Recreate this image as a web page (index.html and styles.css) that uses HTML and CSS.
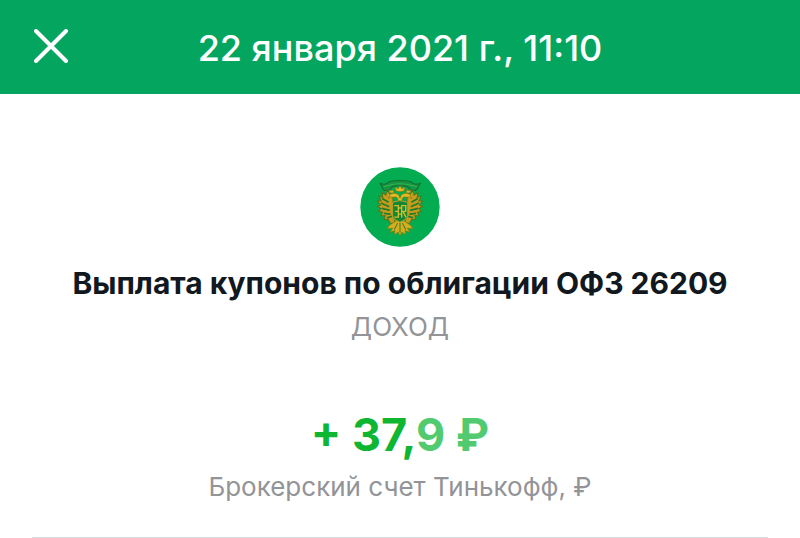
FILE: index.html
```html
<!DOCTYPE html>
<html lang="ru">
<head>
    <meta charset="UTF-8">
    <meta name="viewport" content="width=device-width, initial-scale=1.0">
    <title>Выплата купонов</title>
    <link rel="stylesheet" href="styles.css">
</head>
<body>

<header class="header">
    <button type="button" class="close-btn" aria-label="Закрыть">
        <svg viewBox="0 0 34 34" width="34" height="34" fill="none" stroke="currentColor" stroke-width="4" stroke-linecap="round">
            <path d="M2 2L32 32M32 2L2 32"/>
        </svg>
    </button>
    <h1 class="date">22 января 2021 г., 11:10</h1>
</header>

<main class="operation">
    <svg class="logo" viewBox="32 21 238 238" aria-hidden="true">
        <circle cx="151" cy="140" r="118" fill="#03ac50"/>
        <!-- ribbon -->
        <path d="M92 70Q108 76 118 65Q150 58 184 65Q194 76 211 70L205 82Q201 94 184 90L172 79Q150 73 130 79L118 90Q101 94 98 82Z" fill="#159646" stroke="#176b2b" stroke-width="3"/>
        <path d="M104 79L119 75Q150 66 183 75L199 79" fill="none" stroke="#39b84b" stroke-width="3"/>
        <!-- wings -->
        <g fill="#c79c1e" stroke="#56761b" stroke-width="3">
            <path d="M130 109Q121 103 112 91L109 105L97 96L100 111L88 108L95 122L84 122L93 134L84 138L95 145L87 152L99 156L94 166L107 166L104 178L116 176L122 188L138 188L131 170Z"/>
            <path d="M172 109Q181 103 190 91L193 105L205 96L202 111L214 108L207 122L218 122L209 134L218 138L207 145L215 152L203 156L208 166L195 166L198 178L186 176L180 188L164 188L171 170Z"/>
        </g>
        <g fill="none" stroke="#247b28" stroke-width="5">
            <path d="M98 115L117 126M94 128L119 139M97 144L121 150M103 159L123 161M112 172L127 168"/>
            <path d="M204 115L185 126M208 128L183 139M205 144L181 150M199 159L179 161M190 172L175 168"/>
        </g>
        <!-- crown and heads -->
        <g fill="#e5b920" stroke="#71761b" stroke-width="2">
            <path d="M139 92L136 81L146 85L151 76L156 85L166 81L163 92Q151 98 139 92Z"/>
            <path d="M145 122Q145 107 133 111Q122 108 117 114Q120 99 132 99Q148 98 151 114Q154 98 170 99Q182 99 185 114Q180 108 169 111Q157 107 157 122Z"/>
            <path d="M121 98L118 89L127 92L131 88L133 98ZM169 98L171 88L175 92L184 89L181 98Z"/>
        </g>
        <!-- tail -->
        <path d="M140 181L120 194L112 205L129 203L121 216L136 210L134 222L146 215L151 226L156 215L168 222L166 210L181 216L173 203L190 205L182 194L162 181Z" fill="#d6ad1e" stroke="#718018" stroke-width="2"/>
        <path d="M144 188L134 207M151 187L151 216M158 188L168 207" stroke="#397d22" stroke-width="3"/>
        <!-- shield with monogram -->
        <path d="M129 126L151 121L174 126V167Q172 178 151 185Q131 178 129 167Z" fill="#148735" stroke="#b8a025" stroke-width="3"/>
        <path d="M134 136H146V170H134M136 153H146M156 171V136H168V153H156M160 153L169 171M146 143H156M146 161H156" fill="none" stroke="#d3bd28" stroke-width="4"/>
    </svg>
    <h2 class="title">Выплата купонов по облигации ОФЗ 26209</h2>
    <p class="category">ДОХОД</p>

    <p class="amount">+ 37,<span class="fraction">9 ₽</span></p>
    <p class="account">Брокерский счет Тинькофф, ₽</p>
</main>

<hr class="divider">

</body>
</html>
```

FILE: styles.css
```css
* {
    box-sizing: border-box;
}
body {
    margin: 0;
    background-color: #fff;
    color: #111820;
    font-family: Inter, sans-serif;
}
h1, h2, p {
    margin: 0;
}
.header {
    display: grid;
    grid-template-columns: 1fr auto 1fr;
    align-items: center;
    padding: 24px 34px 22px;
    background-color: #04a65f;
    color: #fff;
}
.close-btn {
    justify-self: start;
    display: flex;
    padding: 0 0 4px;
    border: none;
    background: none;
    color: inherit;
    cursor: pointer;
}
.date {
    font-size: 36px;
    font-weight: 500;
    line-height: 48px;
}
.operation {
    display: flex;
    flex-direction: column;
    align-items: center;
    padding: 73px 32px 34px;
    text-align: center;
}
.logo {
    width: 80px;
    height: 80px;
}
.title {
    margin-top: 16px;
    font-size: 30px;
    font-weight: 700;
    line-height: 40px;
}
.category {
    margin-top: 8px;
    color: #929497;
    font-size: 26px;
    line-height: 32px;
}
.amount {
    margin-top: 64px;
    color: #0fb632;
    font-size: 45px;
    font-weight: 700;
    line-height: 56px;
}
.fraction {
    color: #52cb70;
}
.account {
    margin-top: 8px;
    color: #929497;
    font-size: 26px;
    line-height: 32px;
}
.divider {
    margin: 0 32px;
    border: none;
    border-top: 1px solid #d8dcdc;
}
```
